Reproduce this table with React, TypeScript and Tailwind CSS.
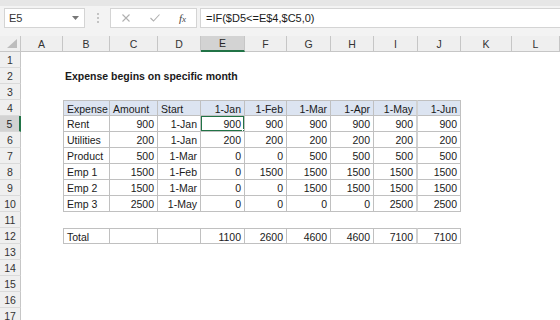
import type { ReactNode } from 'react';

const COLS = ['A', 'B', 'C', 'D', 'E', 'F', 'G', 'H', 'I', 'J', 'K', 'L'];
const ROWS = Array.from({ length: 17 }, (_, i) => i + 1);

// cells B..J per row
const TABLE: Record<number, string[]> = {
  4: ['Expense', 'Amount', 'Start', '1-Jan', '1-Feb', '1-Mar', '1-Apr', '1-May', '1-Jun'],
  5: ['Rent', '900', '1-Jan', '900', '900', '900', '900', '900', '900'],
  6: ['Utilities', '200', '1-Jan', '200', '200', '200', '200', '200', '200'],
  7: ['Product', '500', '1-Mar', '0', '0', '500', '500', '500', '500'],
  8: ['Emp 1', '1500', '1-Feb', '0', '1500', '1500', '1500', '1500', '1500'],
  9: ['Emp 2', '1500', '1-Mar', '0', '0', '1500', '1500', '1500', '1500'],
  10: ['Emp 3', '2500', '1-May', '0', '0', '0', '0', '2500', '2500'],
  12: ['Total', '', '', '1100', '2600', '4600', '4600', '7100', '7100'],
};

function Cell({ row, col }: { row: number; col: number }) {
  const data = TABLE[row];
  const inTable = data && col >= 1 && col <= 9;
  let content: ReactNode = null;
  let cls = 'relative h-[16px] px-[2px] leading-[16px] whitespace-nowrap';

  if (row === 2 && col === 1) {
    return (
      <div className={cls + ' overflow-visible font-bold text-[#1a1a1a]'}>
        Expense begins on specific month
      </div>
    );
  }

  if (inTable) {
    const text = data[col - 1];
    const left = col === 1 || (row === 4 && col <= 3);
    content = text;
    cls += left ? ' text-left pl-[3px]' : ' text-right pr-[3px]';
    cls += ' border-b border-[#c0c0c0]';
    cls += col === 8 ? ' border-r-2 border-r-[#d2d2d2]' : ' border-r border-r-[#c0c0c0]';
    if (row === 4 || row === 12) cls += ' border-t border-t-[#c0c0c0]';
    if (col === 1) cls += ' border-l border-l-[#c0c0c0]';
    if (row === 4) cls += ' bg-[#dce4f1]';
    cls += ' overflow-hidden text-[#1a1a1a]';
  }

  return (
    <div className={cls}>
      {content}
      {row === 5 && col === 4 && (
        <>
          <span className="absolute -top-px -left-px -right-px -bottom-px z-10 border-2 border-[#217346]" />
          <span className="absolute -right-[4px] -bottom-[4px] z-20 h-[6px] w-[6px] border border-white bg-[#217346]" />
        </>
      )}
    </div>
  );
}

export default function App() {
  return (
    <div className="h-[320px] w-[560px] overflow-hidden bg-white font-['Liberation_Sans',Arial,sans-serif] text-[10.5px]">
      {/* ribbon strip + formula bar */}
      <div className="h-[36px] bg-[#f3f3f3]">
        <div className="h-[6px] bg-[#e6e6e6]" />
        <div className="mt-[2px] flex h-[20px] items-stretch">
          <div className="ml-[4px] flex w-[81px] items-center justify-between border border-[#d4d4d4] bg-white pl-[4px] pr-[5px] text-[11px] text-[#333]">
            <span>E5</span>
            <svg width="7" height="4" viewBox="0 0 7 4">
              <polygon points="0,0 7,0 3.5,4" fill="#777" />
            </svg>
          </div>
          <div className="flex w-[25px] items-center justify-center">
            <svg width="2" height="12" viewBox="0 0 2 12">
              <rect x="0" y="1" width="2" height="2" fill="#c4c4c4" />
              <rect x="0" y="5" width="2" height="2" fill="#c4c4c4" />
              <rect x="0" y="9" width="2" height="2" fill="#c4c4c4" />
            </svg>
          </div>
          <div className="flex w-[87px] items-center border border-[#d4d4d4] bg-white">
            <svg className="ml-[11px]" width="8" height="8" viewBox="0 0 8 8">
              <path d="M0.5 0.5 L7.5 7.5 M7.5 0.5 L0.5 7.5" stroke="#b0b0b0" strokeWidth="1.1" />
            </svg>
            <svg className="ml-[20px]" width="10" height="8" viewBox="0 0 10 8">
              <path d="M0.5 4 L3.5 7 L9.5 0.5" stroke="#b0b0b0" strokeWidth="1.1" fill="none" />
            </svg>
            <span className="ml-[19px] font-['Liberation_Serif',serif] text-[11px] italic text-[#444]">
              f<span className="text-[9px]">x</span>
            </span>
          </div>
          <div className="ml-[3px] flex flex-1 items-center border border-r-0 border-[#d4d4d4] bg-white pl-[5px] text-[11px] text-[#1a1a1a]">
            =IF($D5&lt;=E$4,$C5,0)
          </div>
        </div>
      </div>

      {/* sheet */}
      <div className="grid grid-cols-[21px_42px_47px_48px_43px_44px_42px_44px_43px_44px_43px_51px_48px] grid-rows-[16px]">
        <div className="relative h-[16px] border-r border-b border-[#c6c6c6] bg-[#efefef]">
          <svg className="absolute right-[3px] bottom-[3px]" width="10" height="9" viewBox="0 0 10 9">
            <polygon points="10,0 10,9 0,9" fill="#bdbdbd" />
          </svg>
        </div>
        {COLS.map((c, i) =>
          i === 4 ? (
            <div
              key={c}
              className="h-[16px] border-r border-b-2 border-r-[#c6c6c6] border-b-[#217346] bg-[#d3d3d3] text-center leading-[15px] text-[#262626]"
            >
              {c}
            </div>
          ) : (
            <div
              key={c}
              className="h-[16px] border-r border-b border-[#c6c6c6] bg-[#efefef] text-center leading-[16px] text-[#333]"
            >
              {c}
            </div>
          )
        )}

        {ROWS.map((r) => (
          <RowLine key={r} row={r} />
        ))}
      </div>
    </div>
  );
}

function RowLine({ row }: { row: number }) {
  const active = row === 5;
  return (
    <>
      <div
        className={
          active
            ? 'h-[16px] border-r-2 border-b border-r-[#217346] border-b-[#d8d8d8] bg-[#d3d3d3] text-center leading-[16px] text-[#262626]'
            : 'h-[16px] border-r border-b border-r-[#c6c6c6] border-b-[#dadada] bg-[#efefef] text-center leading-[16px] text-[#333]'
        }
      >
        {row}
      </div>
      {COLS.map((c, i) => (
        <Cell key={c} row={row} col={i} />
      ))}
    </>
  );
}
